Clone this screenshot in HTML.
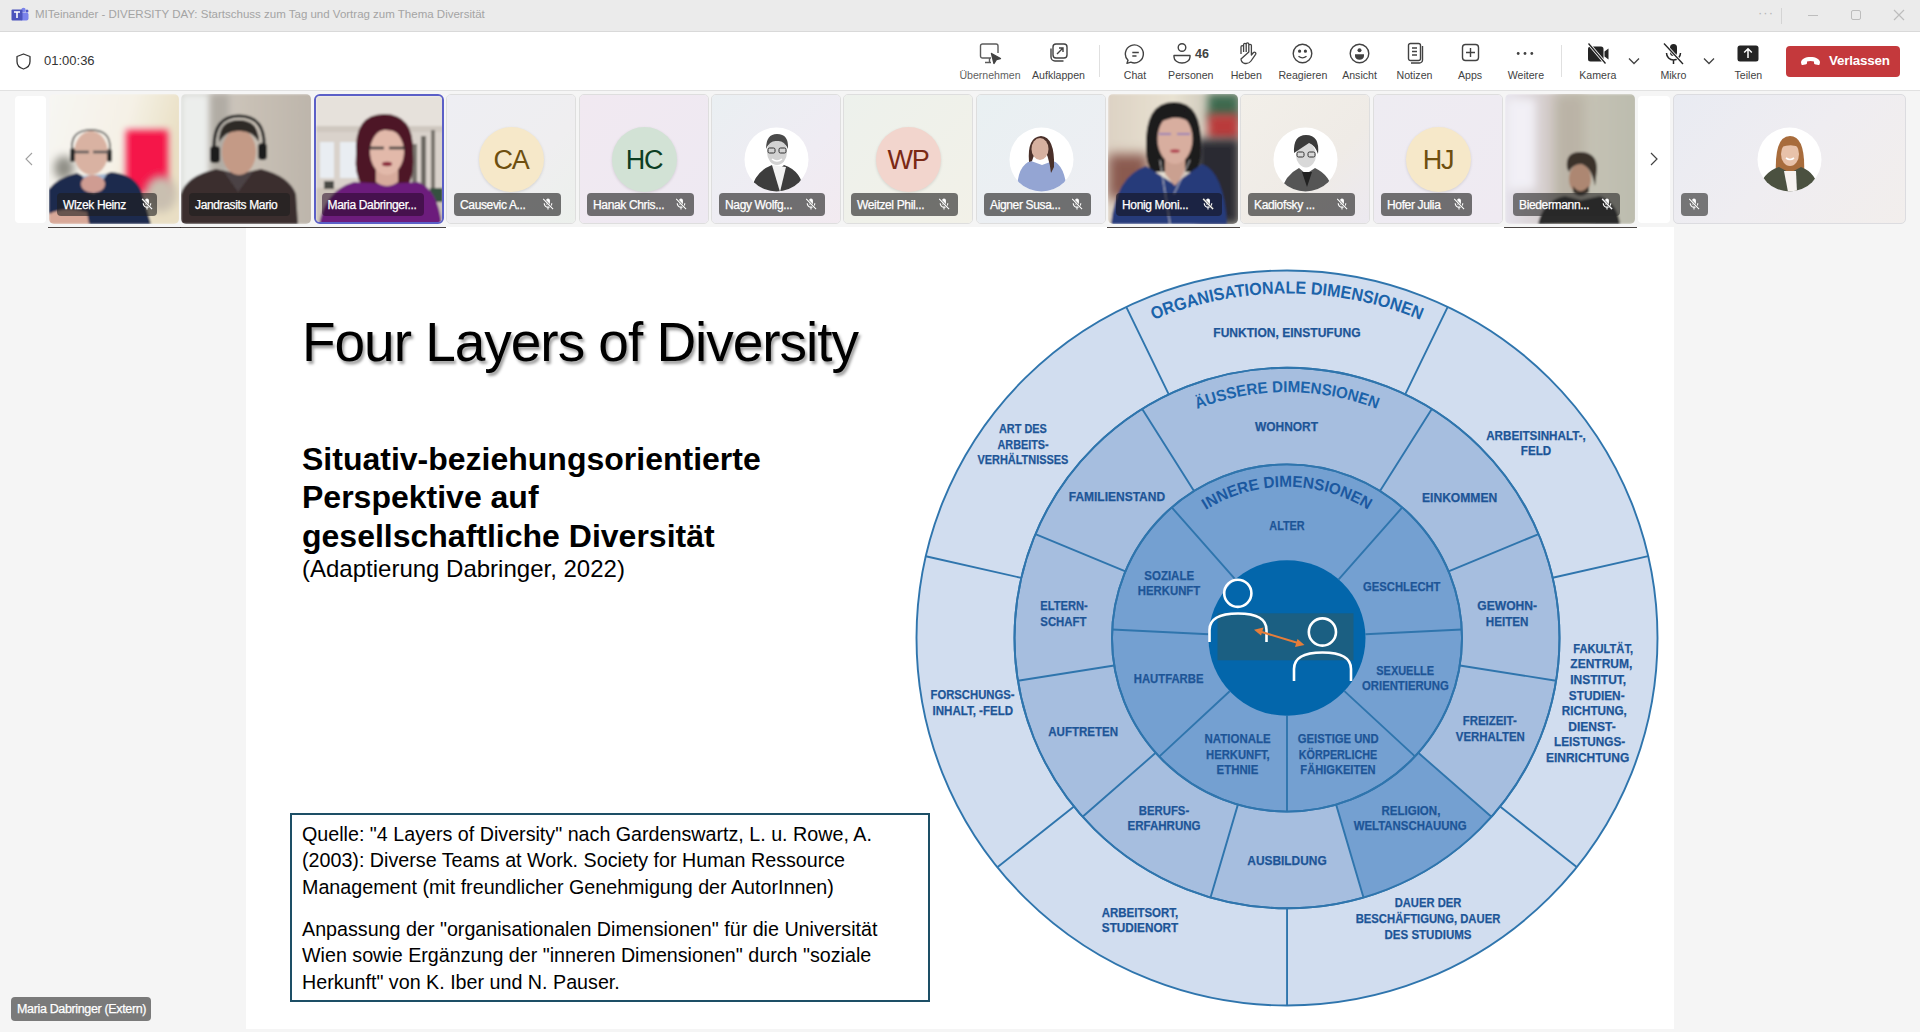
<!DOCTYPE html>
<html><head><meta charset="utf-8">
<style>
*{box-sizing:border-box}
html,body{margin:0;padding:0}
body{width:1920px;height:1032px;overflow:hidden;background:#f5f5f5;position:relative;font-family:"Liberation Sans",sans-serif}
.a{position:absolute}
#tb{left:0;top:0;width:1920px;height:32px;background:#ebebeb;border-bottom:1px solid #d9d9d9}
#bar{left:0;top:32px;width:1920px;height:59px;background:#fff;border-bottom:1px solid #e1e1e1}
.lbl{position:absolute;top:37px;font-size:10.6px;color:#424242;white-space:nowrap;text-align:center;width:80px;margin-left:-40px}
.ic{position:absolute}
.tile{position:absolute;top:94px;width:130px;height:130px;border-radius:5px;overflow:hidden}
.badge{position:absolute;left:8px;top:99px;height:23px;border-radius:4px;background:rgba(70,70,70,.72);color:#fff;font-size:12px;line-height:24.5px;padding-left:6px;white-space:nowrap;letter-spacing:-0.35px;-webkit-text-stroke:0.25px #fff}
.mic{position:absolute;top:5px;width:12px;height:12px}
.tile>svg{display:block}
.tbg{position:absolute;left:0;top:0;right:0;bottom:0}
.av{position:absolute;left:32px;top:32px;width:65px;height:65px;border-radius:50%;text-align:center;line-height:67px;font-size:27px;letter-spacing:-1.2px;text-indent:-1px;box-shadow:0 1px 3px rgba(0,0,0,.12)}
#slide{left:246px;top:227px;width:1428px;height:802px;background:#fff}
</style></head><body>
<!-- title bar -->
<div id="tb" class="a">
  <svg class="a" style="left:11px;top:7px" width="18" height="16" viewBox="0 0 18 16">
    <circle cx="12.5" cy="3" r="2.2" fill="#7b83eb"/><circle cx="16" cy="4" r="1.5" fill="#5059c9"/>
    <rect x="9" y="5.5" width="8.5" height="8" rx="2" fill="#7b83eb"/>
    <rect x="0.5" y="2.5" width="11" height="11" rx="1" fill="#4b53bc"/>
    <path d="M3 5h6M6 5v6" stroke="#fff" stroke-width="1.6"/>
  </svg>
  <div class="a" style="left:35px;top:8px;font-size:11.5px;color:#a4a4a4;white-space:nowrap">MITeinander - DIVERSITY DAY: Startschuss zum Tag und Vortrag zum Thema Diversität</div>
  <div class="a" style="left:1758px;top:5px;font-size:13px;color:#b5b5b5;letter-spacing:1px">···</div>
  <div class="a" style="left:1781px;top:8px;width:1px;height:16px;background:#d4d4d4"></div>
  <div class="a" style="left:1808px;top:15px;width:10px;height:1px;background:#bdbdbd"></div>
  <div class="a" style="left:1851px;top:10px;width:10px;height:10px;border:1px solid #bdbdbd;border-radius:2px"></div>
  <svg class="a" style="left:1893px;top:9px" width="12" height="12"><path d="M1 1L11 11M11 1L1 11" stroke="#bdbdbd" stroke-width="1.2"/></svg>
</div>
<!-- toolbar -->
<div id="bar" class="a">
  <svg class="a" style="left:16px;top:21px" width="15" height="17" viewBox="0 0 15 17"><path d="M7.5 1 L14 3.5 V8.5 C14 12.5 11 15 7.5 16 C4 15 1 12.5 1 8.5 V3.5 Z" fill="none" stroke="#333" stroke-width="1.3" stroke-linejoin="round"/></svg>
  <div class="a" style="left:44px;top:21px;font-size:13px;color:#333">01:00:36</div>
  <!-- icons -->
  <svg class="a" style="left:979px;top:10px" width="24" height="24" viewBox="0 0 24 24" fill="none" stroke="#5c5c5c" stroke-width="1.4">
    <path d="M12 16H3.5A2 2 0 0 1 1.5 14V4A2 2 0 0 1 3.5 2H17A2 2 0 0 1 19 4V11"/><path d="M10.5 16V20M6 20.5H12"/>
    <path d="M12.5 11.5L21.5 16.5L17.5 17.5L15 21.5Z" fill="#424242" stroke="#424242" stroke-linejoin="round"/>
  </svg>
  <svg class="a" style="left:1048px;top:10px" width="22" height="22" viewBox="0 0 22 22" fill="none" stroke="#424242" stroke-width="1.4">
    <rect x="5" y="2" width="14" height="14" rx="3"/><path d="M3 6.5V15A4 4 0 0 0 7 19H15.5"/><path d="M9 12L15 6M11 6H15V10"/>
  </svg>
  <div class="a" style="left:1099px;top:13px;width:1px;height:32px;background:#e0e0e0"></div>
  <svg class="a" style="left:1124px;top:11px" width="23" height="22" viewBox="0 0 23 22" fill="none" stroke="#424242" stroke-width="1.4">
    <path d="M4 17.3L3 20.3L6.8 19.2A9 9 0 1 0 4 17.3Z" stroke-linejoin="round"/><path d="M8.3 9.5H14.8M8.3 13H12.5"/>
  </svg>
  <svg class="a" style="left:1173px;top:11px" width="20" height="22" viewBox="0 0 20 22" fill="none" stroke="#424242" stroke-width="1.4">
    <circle cx="9" cy="4.5" r="3.8"/><path d="M1 12.5H17V14A8 6 0 0 1 1 14Z" stroke-linejoin="round"/>
  </svg>
  <div class="a" style="left:1195px;top:14.5px;font-size:12.5px;font-weight:700;color:#424242">46</div>
  <svg class="a" style="left:1237px;top:10px" width="20" height="23" viewBox="0 0 20 23" fill="none" stroke="#424242" stroke-width="1.3" stroke-linejoin="round">
    <path d="M4 12V5A1.3 1.3 0 0 1 6.6 5V10M6.6 10V2.6A1.3 1.3 0 0 1 9.2 2.6V10M9.2 10V2.2A1.3 1.3 0 0 1 11.8 2.2V10M11.8 10V3.6A1.3 1.3 0 0 1 14.4 3.6V13L16.5 10.5A1.4 1.4 0 0 1 18.6 12.3L14 19A6 6 0 0 1 9 21.5H8A5 5 0 0 1 4 17Z"/>
  </svg>
  <svg class="a" style="left:1292px;top:11px" width="21" height="21" viewBox="0 0 21 21" fill="none" stroke="#424242" stroke-width="1.4">
    <circle cx="10.5" cy="10.5" r="9.3"/><path d="M6.5 13.2Q10.5 16.5 14.5 13.2"/><circle cx="7.6" cy="8.2" r=".9" fill="#424242"/><circle cx="13.4" cy="8.2" r=".9" fill="#424242"/>
  </svg>
  <svg class="a" style="left:1349px;top:11px" width="21" height="21" viewBox="0 0 21 21" fill="none" stroke="#424242" stroke-width="1.4">
    <circle cx="10.5" cy="10.5" r="9.3"/><circle cx="10.5" cy="7.3" r="2" fill="#424242" stroke="none"/><path d="M6 11.3H15V13A4.5 3.8 0 0 1 6 13Z" fill="#424242" stroke="none"/>
  </svg>
  <svg class="a" style="left:1407px;top:10px" width="18" height="23" viewBox="0 0 18 23" fill="none" stroke="#424242" stroke-width="1.4">
    <rect x="1.5" y="1.5" width="12" height="17" rx="2"/><path d="M15.5 4V18A3 3 0 0 1 12.5 21H4"/><path d="M5 6H10M5 9.5H10M5 13H10"/>
  </svg>
  <svg class="a" style="left:1461px;top:11px" width="20" height="20" viewBox="0 0 20 20" fill="none" stroke="#424242" stroke-width="1.4">
    <rect x="1.5" y="1.5" width="16" height="16" rx="3"/><path d="M9.5 5V14M5 9.5H14"/>
  </svg>
  <svg class="a" style="left:1516px;top:19px" width="18" height="5" viewBox="0 0 18 5" fill="#424242"><circle cx="2.2" cy="2.5" r="1.4"/><circle cx="9" cy="2.5" r="1.4"/><circle cx="15.8" cy="2.5" r="1.4"/></svg>
  <div class="a" style="left:1561px;top:13px;width:1px;height:32px;background:#e0e0e0"></div>
  <svg class="a" style="left:1586px;top:10px" width="24" height="24" viewBox="0 0 24 24">
    <path d="M2 7A2.5 2.5 0 0 1 4.5 4.5H15A2.5 2.5 0 0 1 17.5 7V17A2.5 2.5 0 0 1 15 19.5H4.5A2.5 2.5 0 0 1 2 17Z" fill="#242424"/><path d="M18.5 9.5L22.5 6.5V17.5L18.5 14.5Z" fill="#242424"/>
    <path d="M2.5 1.5L19.5 21.5" stroke="#fff" stroke-width="3"/><path d="M2.5 1.5L19.5 21.5" stroke="#242424" stroke-width="1.3"/>
  </svg>
  <svg class="a" style="left:1628px;top:25px" width="12" height="8" viewBox="0 0 12 8" fill="none" stroke="#424242" stroke-width="1.3"><path d="M1 1.5L6 6.5L11 1.5"/></svg>
  <svg class="a" style="left:1662px;top:10px" width="23" height="24" viewBox="0 0 23 24" fill="none" stroke="#242424" stroke-width="1.5">
    <rect x="8" y="2" width="7" height="12" rx="3.5" fill="#242424" stroke="none"/><path d="M4.5 11A7 7 0 0 0 18.5 11M11.5 18V22"/>
    <path d="M2 1.5L21 22" stroke="#fff" stroke-width="3"/><path d="M2 1.5L21 22" stroke-width="1.3"/>
  </svg>
  <svg class="a" style="left:1703px;top:25px" width="12" height="8" viewBox="0 0 12 8" fill="none" stroke="#424242" stroke-width="1.3"><path d="M1 1.5L6 6.5L11 1.5"/></svg>
  <svg class="a" style="left:1737px;top:13px" width="22" height="17" viewBox="0 0 22 17">
    <rect x="0.5" y="0.5" width="21" height="16" rx="2.5" fill="#242424"/><path d="M11 13V4M7.2 7.5L11 3.7L14.8 7.5" fill="none" stroke="#fff" stroke-width="1.5"/>
  </svg>
  <div class="a" style="left:1786px;top:14px;width:114px;height:31px;border-radius:4px;background:#c4393c"></div>
  <svg class="a" style="left:1800px;top:24px" width="21" height="10" viewBox="0 0 21 10"><path d="M1 6.5C1 3 5.5 1 10.5 1S20 3 20 6.5L19.5 8.5A1 1 0 0 1 18.3 9L14.8 8.2A1 1 0 0 1 14 7.3V5.6C12 4.8 9 4.8 7 5.6V7.3A1 1 0 0 1 6.2 8.2L2.7 9A1 1 0 0 1 1.5 8.5Z" fill="#fff"/></svg>
  <div class="a" style="left:1829px;top:21px;font-size:13.4px;font-weight:700;color:#fff;letter-spacing:-0.2px">Verlassen</div>
  <!-- labels -->
  <div class="lbl" style="left:990px;color:#616161">Übernehmen</div>
  <div class="lbl" style="left:1058.5px">Aufklappen</div>
  <div class="lbl" style="left:1135px">Chat</div>
  <div class="lbl" style="left:1190.8px">Personen</div>
  <div class="lbl" style="left:1246.3px">Heben</div>
  <div class="lbl" style="left:1302.9px">Reagieren</div>
  <div class="lbl" style="left:1359.5px">Ansicht</div>
  <div class="lbl" style="left:1414.5px">Notizen</div>
  <div class="lbl" style="left:1470px">Apps</div>
  <div class="lbl" style="left:1525.9px">Weitere</div>
  <div class="lbl" style="left:1597.8px">Kamera</div>
  <div class="lbl" style="left:1673.4px">Mikro</div>
  <div class="lbl" style="left:1748.4px">Teilen</div>
</div>
<!-- strip -->
<div id="strip"><svg width="0" height="0" style="position:absolute"><defs><filter id="b1" x="-5%" y="-5%" width="110%" height="110%"><feGaussianBlur stdDeviation="1"/></filter><filter id="b3" x="-50%" y="-50%" width="200%" height="200%"><feGaussianBlur stdDeviation="3"/></filter><filter id="b4" x="-50%" y="-50%" width="200%" height="200%"><feGaussianBlur stdDeviation="4"/></filter><filter id="b5" x="-50%" y="-50%" width="200%" height="200%"><feGaussianBlur stdDeviation="6"/></filter></defs></svg>
<div class="a" style="left:15px;top:96px;width:31px;height:127px;background:#fff;border-radius:4px"></div>
<svg class="a" style="left:25px;top:152px" width="8" height="14" viewBox="0 0 8 14" fill="none" stroke="#a0a0a0" stroke-width="1.1"><path d="M7 1L1 7L7 13"/></svg>
<div class="tile" style="left:49px;"><svg width="131" height="130" viewBox="0 0 131 130">
<defs><linearGradient id="g1" x1="0" y1="0" x2="1" y2="0.3"><stop offset="0" stop-color="#f7f6f3"/><stop offset="0.6" stop-color="#f5f1e6"/><stop offset="1" stop-color="#e9dfc4"/></linearGradient></defs>
<g filter="url(#b1)">
<rect width="131" height="130" fill="url(#g1)"/>
<rect x="77" y="36" width="42" height="64" fill="#f5174a" filter="url(#b3)"/>
<ellipse cx="112" cy="100" rx="16" ry="18" fill="#c9bfb0" filter="url(#b4)"/>
<ellipse cx="15" cy="74" rx="10" ry="12" fill="#8f8e86" filter="url(#b4)"/>
<path d="M0 130V95Q8 84 28 79L42 86L62 78Q85 80 92 96L102 130Z" fill="#1f2b4d"/>
<path d="M33 82L45 100L58 80Z" fill="#9fb6d2"/>
<path d="M23 54Q22 36 42 36Q62 36 61 55" fill="none" stroke="#3a3a3a" stroke-width="1.6"/>
<ellipse cx="42" cy="59" rx="17" ry="22" fill="#d9b2a2"/>
<rect x="21" y="54" width="5" height="14" rx="2.5" fill="#2c2c2c"/><rect x="58" y="55" width="5" height="13" rx="2.5" fill="#2c2c2c"/>
<path d="M26 58H40M44 58H60" stroke="#555" stroke-width="2.5"/>
<ellipse cx="44" cy="90" rx="12" ry="9" fill="#cf9c92"/>
<path d="M0 120Q15 112 38 118L40 130H0Z" fill="#d8a898"/>
</g></svg><div class="badge" style="width:100px;background:rgba(30,30,30,.6)">Wlzek Heinz<svg class="mic" style="left:84px" width="13" height="13" viewBox="0 0 13 13" fill="none" stroke="#fff" stroke-width="1.2"><rect x="4.4" y="0.6" width="4.2" height="7.2" rx="2.1" fill="#fff" stroke="none"/><path d="M2.4 5.8A4.1 4.1 0 0 0 10.6 5.8M6.5 10V12.4"/><path d="M1.3 0.9L12 12" stroke="#666" stroke-width="2.4"/><path d="M1.3 0.9L12 12"/></svg></div></div>
<div class="tile" style="left:181px;"><svg width="131" height="130" viewBox="0 0 131 130">
<defs><linearGradient id="g2" x1="0" y1="0" x2="1" y2="0"><stop offset="0" stop-color="#cfcfcc"/><stop offset="0.5" stop-color="#c9c1b6"/><stop offset="1" stop-color="#bdb5ab"/></linearGradient></defs>
<g filter="url(#b1)">
<rect width="131" height="130" fill="url(#g2)"/>
<rect x="0" y="0" width="28" height="95" fill="#eceeec" filter="url(#b3)"/>
<rect x="30" y="0" width="18" height="80" fill="#b1aca4" filter="url(#b3)"/>
<path d="M0 130V100Q5 82 35 75L58 80L80 75Q108 82 115 100L117 130Z" fill="#3a2d2e"/>
<path d="M43 78L57 98L72 78Z" fill="#4b4244"/>
<ellipse cx="58" cy="58" rx="17" ry="23" fill="#c49a86"/>
<path d="M38 48Q38 26 58 26Q78 26 78 48Q70 36 58 37Q46 36 38 48Z" fill="#2e2926"/>
<path d="M33 55Q32 22 58 22Q85 22 83 55" fill="none" stroke="#1f1f1f" stroke-width="3"/>
<rect x="29" y="52" width="10" height="17" rx="4" fill="#1e1e1e"/><rect x="77" y="49" width="9" height="17" rx="4" fill="#1e1e1e"/>
</g></svg><div class="badge" style="width:101px;background:rgba(30,30,30,.6)">Jandrasits Mario</div></div>
<div class="tile" style="left:314px;border:2.5px solid #5b5fc7;border-radius:6px"><svg style='position:absolute;left:0;top:0' width="131" height="130" viewBox="0 0 131 130">
<g filter="url(#b1)">
<rect width="131" height="130" fill="#d9d2cb"/>
<rect x="0" y="0" width="131" height="32" fill="#e6e1db"/>
<rect x="0" y="30" width="131" height="6" fill="#cfc8c0"/>
<rect x="4" y="46" width="14" height="36" fill="#e9edf2"/><rect x="24" y="46" width="18" height="36" fill="#e9edf2"/>
<rect x="96" y="48" width="5" height="52" fill="#77726c"/><rect x="105" y="40" width="5" height="62" fill="#6c6762"/><rect x="115" y="34" width="4" height="70" fill="#77726c"/>
<rect x="0" y="92" width="131" height="38" fill="#cdc4ba"/>
<rect x="114" y="92" width="13" height="14" fill="#34513f"/>
<rect x="8" y="85" width="10" height="8" fill="#4a4a44"/>
<path d="M40 58Q38 18 68 18Q98 18 97 56Q99 78 92 90L46 90Q38 78 40 58Z" fill="#4e1626"/>
<path d="M3 130Q8 95 38 86L70 88L102 86Q122 93 126 130Z" fill="#6c1e7c"/>
<path d="M60 68H82V86Q71 94 60 86Z" fill="#d7ab9c"/>
<ellipse cx="71" cy="56" rx="17" ry="23" fill="#e2b9aa"/>
<path d="M53 42Q57 24 74 25Q89 28 91 46Q82 33 68 34Q58 36 53 42Z" fill="#4e1626"/>
<path d="M53 52H68M73 52H89" stroke="#333" stroke-width="2.4"/>
<ellipse cx="71" cy="68" rx="5" ry="2.2" fill="#8a2038"/>
</g></svg><div class="badge" style="left:5.5px;top:96.5px;width:102px;background:rgba(40,10,40,.55)">Maria Dabringer...</div></div>
<div class="tile" style="left:446px;border:1px solid #dedede;"><div class="tbg" style="background:linear-gradient(135deg,#eeeef3 0%,#efeef0 60%,#ecf0ec 100%)"></div><div class="av" style="background:#f6e8c9;color:#6e4f10">CA</div><div class="badge" style="left:7px;top:98px;width:107px;background:rgba(50,50,50,.68)">Causevic A...<svg class="mic" style="left:88px" width="13" height="13" viewBox="0 0 13 13" fill="none" stroke="#fff" stroke-width="1.2"><rect x="4.4" y="0.6" width="4.2" height="7.2" rx="2.1" fill="#fff" stroke="none"/><path d="M2.4 5.8A4.1 4.1 0 0 0 10.6 5.8M6.5 10V12.4"/><path d="M1.3 0.9L12 12" stroke="#666" stroke-width="2.4"/><path d="M1.3 0.9L12 12"/></svg></div></div>
<div class="tile" style="left:579px;border:1px solid #dedede;"><div class="tbg" style="background:linear-gradient(135deg,#f1e9f1 0%,#eee9f2 100%)"></div><div class="av" style="background:#d2e2d5;color:#0d3e23">HC</div><div class="badge" style="left:7px;top:98px;width:107px;background:rgba(50,50,50,.68)">Hanak Chris...<svg class="mic" style="left:88px" width="13" height="13" viewBox="0 0 13 13" fill="none" stroke="#fff" stroke-width="1.2"><rect x="4.4" y="0.6" width="4.2" height="7.2" rx="2.1" fill="#fff" stroke="none"/><path d="M2.4 5.8A4.1 4.1 0 0 0 10.6 5.8M6.5 10V12.4"/><path d="M1.3 0.9L12 12" stroke="#666" stroke-width="2.4"/><path d="M1.3 0.9L12 12"/></svg></div></div>
<div class="tile" style="left:711px;border:1px solid #dedede;"><div class="tbg" style="background:linear-gradient(135deg,#eaeff2 0%,#efecf3 60%,#f2eaf0 100%)"></div>
<svg class="a" style="left:32px;top:32px" width="65" height="65" viewBox="0 0 65 65"><defs><clipPath id="cn"><circle cx="32.5" cy="32.5" r="32"/></clipPath></defs><g clip-path="url(#cn)">
<rect width="65" height="65" fill="#fff"/>
<path d="M7 65Q10 45 28 38L33 44L40 38Q58 44 60 65Z" fill="#3d3d3d"/>
<path d="M28 38L36 65L42 40Z" fill="#f2f2f2"/>
<ellipse cx="33" cy="25" rx="10" ry="13" fill="#d2d2d2"/>
<path d="M22 22Q22 7 33 7Q45 7 44 22Q40 13 33 14Q26 13 22 22Z" fill="#4a4a4a"/>
<g fill="none" stroke="#333" stroke-width="1"><rect x="24" y="21" width="7" height="5" rx="1.5"/><rect x="35" y="21" width="7" height="5" rx="1.5"/></g>
<path d="M28 32Q33 36 38 32" stroke="#fff" stroke-width="1.5" fill="none"/>
</g></svg><div class="badge" style="left:7px;top:98px;width:106px;background:rgba(50,50,50,.68)">Nagy Wolfg...<svg class="mic" style="left:86px" width="13" height="13" viewBox="0 0 13 13" fill="none" stroke="#fff" stroke-width="1.2"><rect x="4.4" y="0.6" width="4.2" height="7.2" rx="2.1" fill="#fff" stroke="none"/><path d="M2.4 5.8A4.1 4.1 0 0 0 10.6 5.8M6.5 10V12.4"/><path d="M1.3 0.9L12 12" stroke="#666" stroke-width="2.4"/><path d="M1.3 0.9L12 12"/></svg></div></div>
<div class="tile" style="left:843px;border:1px solid #dedede;"><div class="tbg" style="background:linear-gradient(135deg,#edf1ec 0%,#f2f1e8 100%)"></div><div class="av" style="background:#f2d5cd;color:#7b2915">WP</div><div class="badge" style="left:7px;top:98px;width:107px;background:rgba(50,50,50,.68)">Weitzel Phil...<svg class="mic" style="left:87px" width="13" height="13" viewBox="0 0 13 13" fill="none" stroke="#fff" stroke-width="1.2"><rect x="4.4" y="0.6" width="4.2" height="7.2" rx="2.1" fill="#fff" stroke="none"/><path d="M2.4 5.8A4.1 4.1 0 0 0 10.6 5.8M6.5 10V12.4"/><path d="M1.3 0.9L12 12" stroke="#666" stroke-width="2.4"/><path d="M1.3 0.9L12 12"/></svg></div></div>
<div class="tile" style="left:976px;border:1px solid #dedede;"><div class="tbg" style="background:linear-gradient(135deg,#e9f0f2 0%,#eeeef3 100%)"></div>
<svg class="a" style="left:32px;top:32px" width="65" height="65" viewBox="0 0 65 65"><defs><clipPath id="ca2"><circle cx="32.5" cy="32.5" r="32"/></clipPath></defs><g clip-path="url(#ca2)">
<rect width="65" height="65" fill="#fff"/>
<path d="M8 65Q8 38 22 34L33 38L44 34Q56 38 58 65Z" fill="#94a5d3"/>
<path d="M20 35Q18 10 32 9Q46 10 45 40L42 46Q40 28 33 18Q25 26 23 34Z" fill="#4a3029"/>
<ellipse cx="31" cy="22" rx="8.5" ry="11" fill="#d7b1a0"/>
</g></svg><div class="badge" style="left:7px;top:98px;width:107px;background:rgba(50,50,50,.68)">Aigner Susa...<svg class="mic" style="left:87px" width="13" height="13" viewBox="0 0 13 13" fill="none" stroke="#fff" stroke-width="1.2"><rect x="4.4" y="0.6" width="4.2" height="7.2" rx="2.1" fill="#fff" stroke="none"/><path d="M2.4 5.8A4.1 4.1 0 0 0 10.6 5.8M6.5 10V12.4"/><path d="M1.3 0.9L12 12" stroke="#666" stroke-width="2.4"/><path d="M1.3 0.9L12 12"/></svg></div></div>
<div class="tile" style="left:1108px;"><svg width="131" height="130" viewBox="0 0 131 130">
<defs><linearGradient id="g9" x1="0" y1="0" x2="1" y2="0"><stop offset="0" stop-color="#ddd2c4"/><stop offset="0.5" stop-color="#e8e2d2"/><stop offset="1" stop-color="#b8b4a8"/></linearGradient></defs>
<g filter="url(#b1)">
<rect width="131" height="130" fill="url(#g9)"/>
<rect x="100" y="0" width="31" height="25" fill="#3e6a4f" filter="url(#b4)"/>
<rect x="100" y="20" width="31" height="25" fill="#b93b3b" filter="url(#b4)"/>
<rect x="88" y="45" width="43" height="85" fill="#2b2a30" filter="url(#b4)"/>
<rect x="0" y="60" width="40" height="45" fill="#8a5a50" filter="url(#b5)"/>
<path d="M38 55Q36 8 66 8Q95 8 93 55Q93 70 88 78L44 78Q38 70 38 55Z" fill="#1f1a1b"/>
<path d="M3 130Q8 82 38 72L66 90L94 70Q116 78 119 130Z" fill="#263b7a"/>
<path d="M57 62H77V80L67 92L57 80Z" fill="#caa090"/>
<ellipse cx="67" cy="45" rx="17.5" ry="25" fill="#d8ae9f"/>
<path d="M49 30Q54 14 70 15Q84 17 86 32Q76 22 64 24Q55 26 49 30Z" fill="#1f1a1b"/>
<path d="M51 40H63M69 40H82" stroke="#8474bd" stroke-width="1.6"/>
<ellipse cx="67" cy="57" rx="5" ry="1.8" fill="#b04050"/>
<path d="M52 66L62 130M82 66L66 100" stroke="#ddd" stroke-width=".8" fill="none"/>
</g></svg><div class="badge" style="width:106px;background:rgba(20,20,30,.6)">Honig Moni...<svg class="mic" style="left:86px" width="13" height="13" viewBox="0 0 13 13" fill="none" stroke="#fff" stroke-width="1.2"><rect x="4.4" y="0.6" width="4.2" height="7.2" rx="2.1" fill="#fff" stroke="none"/><path d="M2.4 5.8A4.1 4.1 0 0 0 10.6 5.8M6.5 10V12.4"/><path d="M1.3 0.9L12 12" stroke="#666" stroke-width="2.4"/><path d="M1.3 0.9L12 12"/></svg></div></div>
<div class="tile" style="left:1240px;border:1px solid #dedede;"><div class="tbg" style="background:linear-gradient(135deg,#f2efe9 0%,#efebe6 60%,#ece9f0 100%)"></div>
<svg class="a" style="left:32px;top:32px" width="65" height="65" viewBox="0 0 65 65"><defs><clipPath id="ck"><circle cx="32.5" cy="32.5" r="32"/></clipPath></defs><g clip-path="url(#ck)">
<rect width="65" height="65" fill="#fff"/>
<path d="M8 65Q12 48 26 41L33 47L42 41Q57 48 60 65Z" fill="#555"/>
<path d="M29 45L34 60L39 45Z" fill="#222"/>
<ellipse cx="33" cy="28" rx="10" ry="12.5" fill="#d8d8d8"/>
<path d="M21 26Q20 8 33 8Q47 8 45 27Q42 18 36 16Q30 20 21 26Z" fill="#3b3b3b"/>
<g fill="none" stroke="#333" stroke-width="1"><rect x="24" y="25" width="7" height="5" rx="1.5"/><rect x="35" y="25" width="7" height="5" rx="1.5"/></g>
</g></svg><div class="badge" style="left:7px;top:98px;width:107px;background:rgba(50,50,50,.68)">Kadiofsky ...<svg class="mic" style="left:88px" width="13" height="13" viewBox="0 0 13 13" fill="none" stroke="#fff" stroke-width="1.2"><rect x="4.4" y="0.6" width="4.2" height="7.2" rx="2.1" fill="#fff" stroke="none"/><path d="M2.4 5.8A4.1 4.1 0 0 0 10.6 5.8M6.5 10V12.4"/><path d="M1.3 0.9L12 12" stroke="#666" stroke-width="2.4"/><path d="M1.3 0.9L12 12"/></svg></div></div>
<div class="tile" style="left:1373px;border:1px solid #dedede;"><div class="tbg" style="background:linear-gradient(135deg,#eeecf2 0%,#efeaf2 100%)"></div><div class="av" style="background:#f6e8c9;color:#6e4f10">HJ</div><div class="badge" style="left:7px;top:98px;width:91px;background:rgba(50,50,50,.68)">Hofer Julia<svg class="mic" style="left:72px" width="13" height="13" viewBox="0 0 13 13" fill="none" stroke="#fff" stroke-width="1.2"><rect x="4.4" y="0.6" width="4.2" height="7.2" rx="2.1" fill="#fff" stroke="none"/><path d="M2.4 5.8A4.1 4.1 0 0 0 10.6 5.8M6.5 10V12.4"/><path d="M1.3 0.9L12 12" stroke="#666" stroke-width="2.4"/><path d="M1.3 0.9L12 12"/></svg></div></div>
<div class="tile" style="left:1505px;"><svg width="131" height="130" viewBox="0 0 131 130">
<defs><linearGradient id="g12" x1="0" y1="0" x2="1" y2="0"><stop offset="0" stop-color="#e6e3ec"/><stop offset="0.35" stop-color="#d3cbc9"/><stop offset="0.55" stop-color="#c7c4b6"/><stop offset="1" stop-color="#bcbcae"/></linearGradient></defs>
<g filter="url(#b1)">
<rect width="131" height="130" fill="url(#g12)"/>
<rect x="2" y="5" width="28" height="90" fill="#f2f0f6" filter="url(#b4)"/>
<rect x="50" y="0" width="30" height="130" fill="#bab3a6" filter="url(#b5)"/>
<path d="M33 130Q38 106 60 102L76 106L95 102Q112 108 115 130Z" fill="#2b2b2b"/>
<ellipse cx="75" cy="85" rx="11" ry="15" fill="#ad8772"/>
<path d="M62 74Q60 58 75 58Q92 58 92 75L90 92Q86 72 76 70Q68 70 64 78Z" fill="#3b302a"/>
<path d="M68 92Q75 102 84 92L84 98Q75 106 68 98Z" fill="#3b302a"/>
</g></g></svg><div class="badge" style="width:107px;background:rgba(40,40,40,.6)">Biedermann...<svg class="mic" style="left:88px" width="13" height="13" viewBox="0 0 13 13" fill="none" stroke="#fff" stroke-width="1.2"><rect x="4.4" y="0.6" width="4.2" height="7.2" rx="2.1" fill="#fff" stroke="none"/><path d="M2.4 5.8A4.1 4.1 0 0 0 10.6 5.8M6.5 10V12.4"/><path d="M1.3 0.9L12 12" stroke="#666" stroke-width="2.4"/><path d="M1.3 0.9L12 12"/></svg></div></div>
<div class="a" style="left:48px;top:226.5px;width:133px;height:1.5px;background:#2a2422;opacity:.85;z-index:5"></div>
<div class="a" style="left:180px;top:226.5px;width:133px;height:1.5px;background:#2a2422;opacity:.85;z-index:5"></div>
<div class="a" style="left:313px;top:226.5px;width:133px;height:1.5px;background:#2a2422;opacity:.85;z-index:5"></div>
<div class="a" style="left:1107px;top:226.5px;width:133px;height:1.5px;background:#2a2422;opacity:.85;z-index:5"></div>
<div class="a" style="left:1504px;top:226.5px;width:133px;height:1.5px;background:#2a2422;opacity:.85;z-index:5"></div>
<div class="a" style="left:1638px;top:96px;width:32px;height:127px;background:#fff;border-radius:4px"></div>
<svg class="a" style="left:1650px;top:152px" width="8" height="14" viewBox="0 0 8 14" fill="none" stroke="#424242" stroke-width="1.2"><path d="M1 1L7 7L1 13"/></svg>
<div class="tile" style="left:1673px;width:233px;border:1px solid #dcdce0;background:linear-gradient(135deg,#e9ebf2 0%,#efedf1 50%,#f2eeec 100%)">
<svg class="a" style="left:83px;top:32px" width="65" height="65" viewBox="0 0 65 65"><defs><clipPath id="cb"><circle cx="32.5" cy="32.5" r="32"/></clipPath></defs><g clip-path="url(#cb)">
<rect width="65" height="65" fill="#fff"/>
<path d="M19 48Q17 9 33 9Q49 9 47 48Z" fill="#a86c3c"/>
<path d="M2 65Q4 46 22 40L33 46L44 40Q60 46 62 65Z" fill="#4b5140"/>
<path d="M27 44L31 65L40 65L39 44Z" fill="#f6f2ef"/>
<ellipse cx="33" cy="27" rx="9" ry="12" fill="#e8c2aa"/>
<path d="M24 20Q27 12 36 13Q42 15 43 21Q36 16 24 20Z" fill="#a86c3c"/>
<path d="M29 31Q33 34 37 31" stroke="#fff" stroke-width="1.6" fill="none"/>
</g></svg>
<div class="badge" style="left:7px;top:98px;width:27px;padding:0"><svg class="mic" style="left:7px" width="13" height="13" viewBox="0 0 13 13" fill="none" stroke="#fff" stroke-width="1.2"><rect x="4.4" y="0.6" width="4.2" height="7.2" rx="2.1" fill="#fff" stroke="none"/><path d="M2.4 5.8A4.1 4.1 0 0 0 10.6 5.8M6.5 10V12.4"/><path d="M1.3 0.9L12 12" stroke="#666" stroke-width="2.4"/><path d="M1.3 0.9L12 12"/></svg></div></div></div>
<!-- slide -->
<div id="slide" class="a"></div>
<div class="a" style="left:302px;top:314.9px;font-size:55px;line-height:55px;letter-spacing:-1.03px;color:#000;white-space:nowrap;text-shadow:2px 3px 3px rgba(0,0,0,.38)">Four Layers of Diversity</div>
<div class="a" style="left:302px;top:439.7px;font-size:32px;line-height:38.4px;font-weight:700;color:#000;white-space:nowrap">Situativ-beziehungsorientierte<br>Perspektive auf<br>gesellschaftliche Diversität</div>
<div class="a" style="left:302px;top:553.7px;font-size:24px;line-height:30px;color:#000;white-space:nowrap">(Adaptierung Dabringer, 2022)</div>
<div class="a" style="left:290px;top:813.4px;width:640px;height:189px;border:2px solid #1d4f66"></div>
<div class="a" style="left:302px;top:820.9px;font-size:19.7px;line-height:26.5px;color:#000;white-space:nowrap">Quelle: "4 Layers of Diversity" nach Gardenswartz, L. u. Rowe, A.<br>(2003): Diverse Teams at Work. Society for Human Ressource<br>Management (mit freundlicher Genehmigung der AutorInnen)</div>
<div class="a" style="left:302px;top:915.9px;font-size:19.7px;line-height:26.5px;color:#000;white-space:nowrap">Anpassung der "organisationalen Dimensionen" für die Universität<br>Wien sowie Ergänzung der "inneren Dimensionen" durch "soziale<br>Herkunft" von K. Iber und N. Pauser.</div>
<svg class="a" style="left:0;top:0" width="1920" height="1032" viewBox="0 0 1920 1032" font-family="Liberation Sans" font-weight="700">
<ellipse cx="1287.0" cy="638.0" rx="370.5" ry="367.54" fill="#d1ddef" stroke="#2f75ad" stroke-width="1.9"/>
<ellipse cx="1287.0" cy="638.0" rx="272.5" ry="270.32" fill="#a6bedf" stroke="#2f75ad" stroke-width="1.9"/>
<path d="M1363.48,897.45A272.5,270.32 0 0 0 1491.41,816.77L1418.27,752.80A175.0,173.60 0 0 1 1336.12,804.62Z" fill="#74a0d1"/>
<ellipse cx="1287.0" cy="638.0" rx="175.0" ry="173.60" fill="#74a0d1" stroke="#2f75ad" stroke-width="1.9"/>
<path d="M1405.21,394.44L1447.73,306.85M1168.74,394.46L1126.21,306.88M1021.32,577.88L925.78,556.26M1073.98,806.57L997.37,867.20M1287.05,908.32L1287.06,1005.54M1500.08,806.50L1576.71,867.10M1552.65,577.79L1648.19,556.14M1379.99,490.94L1431.81,409.01M1194.01,490.94L1142.19,409.01M1125.44,571.29L1035.43,534.12M1114.20,665.46L1017.93,680.75M1155.73,752.80L1082.59,816.77M1237.88,804.62L1210.52,897.45M1336.12,804.62L1363.48,897.45M1418.27,752.80L1491.41,816.77M1459.80,665.46L1556.07,680.75M1448.56,571.29L1538.57,534.12M1365.41,634.20L1461.79,629.52M1338.71,579.41L1402.27,507.38M1235.29,579.41L1171.73,507.38M1208.59,634.20L1112.21,629.52M1229.68,691.21L1159.22,756.62M1287.00,715.87L1287.00,811.60M1344.41,691.11L1414.99,756.39" stroke="#2f75ad" stroke-width="1.9" fill="none"/>
<ellipse cx="1287.0" cy="638.0" rx="175.0" ry="173.60" fill="none" stroke="#2f75ad" stroke-width="1.9"/>
<ellipse cx="1287.0" cy="638.0" rx="272.5" ry="270.32" fill="none" stroke="#2f75ad" stroke-width="1.9"/>
<ellipse cx="1287.0" cy="638.0" rx="78.5" ry="77.87" fill="#0366ab"/>
<rect x="1217.5" y="613.3" width="136" height="47" fill="#1b5f82"/>
<g fill="none" stroke="#fff" stroke-width="2.6"><circle cx="1237.8" cy="593.3" r="13.6"/><path d="M1209.5 642V630Q1209.5 613.5 1238 613.5Q1266.5 613.5 1266.5 630V642"/><circle cx="1322.4" cy="632" r="13.6"/><path d="M1294 681V669Q1294 652.5 1322.5 652.5Q1351 652.5 1351 669V681"/></g>
<g stroke="#e57d3a" stroke-width="2" fill="#e57d3a"><path d="M1260 631.5L1298 643" fill="none"/><path d="M1254 629.7L1263.5 627.5L1261 635.5Z" stroke="none"/><path d="M1304.5 645L1295 647L1297.5 639Z" stroke="none"/></g>
<defs><path id="arcO" d="M986.23,465.74A347.3,344.52 0 0 1 1587.77,465.74" fill="none"/><path id="arcA" d="M1072.40,515.09A247.8,245.82 0 0 1 1501.60,515.09" fill="none"/><path id="arcI" d="M1154.93,562.36A152.5,151.28 0 0 1 1419.07,562.36" fill="none"/></defs>
<text font-size="17.5" fill="#1b63aa"><textPath href="#arcO" startOffset="50%" text-anchor="middle" textLength="274" lengthAdjust="spacingAndGlyphs">ORGANISATIONALE DIMENSIONEN</textPath></text>
<text font-size="16" fill="#1b63aa"><textPath href="#arcA" startOffset="50%" text-anchor="middle" textLength="184" lengthAdjust="spacingAndGlyphs">ÄUSSERE DIMENSIONEN</textPath></text>
<text font-size="15.8" fill="#1b58a0"><textPath href="#arcI" startOffset="50%" text-anchor="middle" textLength="171" lengthAdjust="spacingAndGlyphs">INNERE DIMENSIONEN</textPath></text>
<g font-size="12.4" fill="#1d5597" stroke="#1d5597" stroke-width="0.25" text-anchor="middle">
<text x="1286.9" y="337.2" textLength="147.2" lengthAdjust="spacingAndGlyphs">FUNKTION, EINSTUFUNG</text>
<text x="1286.5" y="431.4" textLength="63" lengthAdjust="spacingAndGlyphs">WOHNORT</text>
<text x="1022.9" y="432.8" textLength="47.8" lengthAdjust="spacingAndGlyphs">ART DES</text>
<text x="1023.1" y="448.5" textLength="51.2" lengthAdjust="spacingAndGlyphs">ARBEITS-</text>
<text x="1022.9" y="464.0" textLength="90.9" lengthAdjust="spacingAndGlyphs">VERHÄLTNISSES</text>
<text x="1116.9" y="501.4" textLength="96.3" lengthAdjust="spacingAndGlyphs">FAMILIENSTAND</text>
<text x="1536" y="439.6" textLength="99.6" lengthAdjust="spacingAndGlyphs">ARBEITSINHALT-,</text>
<text x="1536" y="455.0" textLength="30.4" lengthAdjust="spacingAndGlyphs">FELD</text>
<text x="1459.6" y="502.0" textLength="75.2" lengthAdjust="spacingAndGlyphs">EINKOMMEN</text>
<text x="1287" y="529.8" textLength="35.4" lengthAdjust="spacingAndGlyphs">ALTER</text>
<text x="1169.2" y="579.9" textLength="49.7" lengthAdjust="spacingAndGlyphs">SOZIALE</text>
<text x="1169" y="595.3" textLength="62.5" lengthAdjust="spacingAndGlyphs">HERKUNFT</text>
<text x="1401.8" y="590.5" textLength="77.4" lengthAdjust="spacingAndGlyphs">GESCHLECHT</text>
<text x="1064" y="610.1" textLength="47.3" lengthAdjust="spacingAndGlyphs">ELTERN-</text>
<text x="1063.4" y="625.5" textLength="46.2" lengthAdjust="spacingAndGlyphs">SCHAFT</text>
<text x="1507.2" y="610.1" textLength="59.7" lengthAdjust="spacingAndGlyphs">GEWOHN-</text>
<text x="1507.1" y="625.5" textLength="42.6" lengthAdjust="spacingAndGlyphs">HEITEN</text>
<text x="1168.6" y="683.0" textLength="69.7" lengthAdjust="spacingAndGlyphs">HAUTFARBE</text>
<text x="1405.2" y="674.5" textLength="57.9" lengthAdjust="spacingAndGlyphs">SEXUELLE</text>
<text x="1405.4" y="690.1" textLength="86.7" lengthAdjust="spacingAndGlyphs">ORIENTIERUNG</text>
<text x="1237.6" y="742.6" textLength="66" lengthAdjust="spacingAndGlyphs">NATIONALE</text>
<text x="1237.9" y="758.5" textLength="63.7" lengthAdjust="spacingAndGlyphs">HERKUNFT,</text>
<text x="1237.5" y="774.1" textLength="41.8" lengthAdjust="spacingAndGlyphs">ETHNIE</text>
<text x="1338.2" y="742.6" textLength="80.7" lengthAdjust="spacingAndGlyphs">GEISTIGE UND</text>
<text x="1338" y="758.5" textLength="78.3" lengthAdjust="spacingAndGlyphs">KÖRPERLICHE</text>
<text x="1338" y="774.1" textLength="75.3" lengthAdjust="spacingAndGlyphs">FÄHIGKEITEN</text>
<text x="972.5" y="699.2" textLength="83.9" lengthAdjust="spacingAndGlyphs">FORSCHUNGS-</text>
<text x="972.8" y="714.8" textLength="80.5" lengthAdjust="spacingAndGlyphs">INHALT, -FELD</text>
<text x="1083.2" y="736.1" textLength="69.9" lengthAdjust="spacingAndGlyphs">AUFTRETEN</text>
<text x="1489.7" y="725.1" textLength="54" lengthAdjust="spacingAndGlyphs">FREIZEIT-</text>
<text x="1490.3" y="740.5" textLength="69" lengthAdjust="spacingAndGlyphs">VERHALTEN</text>
<text x="1603.2" y="652.7" textLength="59.7" lengthAdjust="spacingAndGlyphs">FAKULTÄT,</text>
<text x="1601.3" y="668.1" textLength="62" lengthAdjust="spacingAndGlyphs">ZENTRUM,</text>
<text x="1598.2" y="683.8" textLength="55.8" lengthAdjust="spacingAndGlyphs">INSTITUT,</text>
<text x="1596.7" y="699.6" textLength="55.8" lengthAdjust="spacingAndGlyphs">STUDIEN-</text>
<text x="1594.3" y="714.8" textLength="65.1" lengthAdjust="spacingAndGlyphs">RICHTUNG,</text>
<text x="1592" y="730.8" textLength="47.5" lengthAdjust="spacingAndGlyphs">DIENST-</text>
<text x="1589.6" y="746.3" textLength="71.2" lengthAdjust="spacingAndGlyphs">LEISTUNGS-</text>
<text x="1587.6" y="762.3" textLength="83.2" lengthAdjust="spacingAndGlyphs">EINRICHTUNG</text>
<text x="1164" y="814.5" textLength="50.4" lengthAdjust="spacingAndGlyphs">BERUFS-</text>
<text x="1164" y="829.9" textLength="73.1" lengthAdjust="spacingAndGlyphs">ERFAHRUNG</text>
<text x="1287" y="865.3" textLength="79.3" lengthAdjust="spacingAndGlyphs">AUSBILDUNG</text>
<text x="1410.9" y="814.5" textLength="58.9" lengthAdjust="spacingAndGlyphs">RELIGION,</text>
<text x="1410.2" y="829.9" textLength="112.9" lengthAdjust="spacingAndGlyphs">WELTANSCHAUUNG</text>
<text x="1140" y="916.9" textLength="76.4" lengthAdjust="spacingAndGlyphs">ARBEITSORT,</text>
<text x="1140" y="932.3" textLength="76.4" lengthAdjust="spacingAndGlyphs">STUDIENORT</text>
<text x="1428" y="907.1" textLength="66.6" lengthAdjust="spacingAndGlyphs">DAUER DER</text>
<text x="1428" y="923.4" textLength="144.6" lengthAdjust="spacingAndGlyphs">BESCHÄFTIGUNG, DAUER</text>
<text x="1428" y="939.2" textLength="86.9" lengthAdjust="spacingAndGlyphs">DES STUDIUMS</text>
</g></svg>
<div class="a" style="left:11px;top:997px;width:140px;height:24px;border-radius:4px;background:#7a7a7a;color:#fff;font-size:12.5px;line-height:24px;padding-left:6px;white-space:nowrap;letter-spacing:-0.35px;-webkit-text-stroke:0.25px #fff">Maria Dabringer (Extern)</div>
</body></html>
